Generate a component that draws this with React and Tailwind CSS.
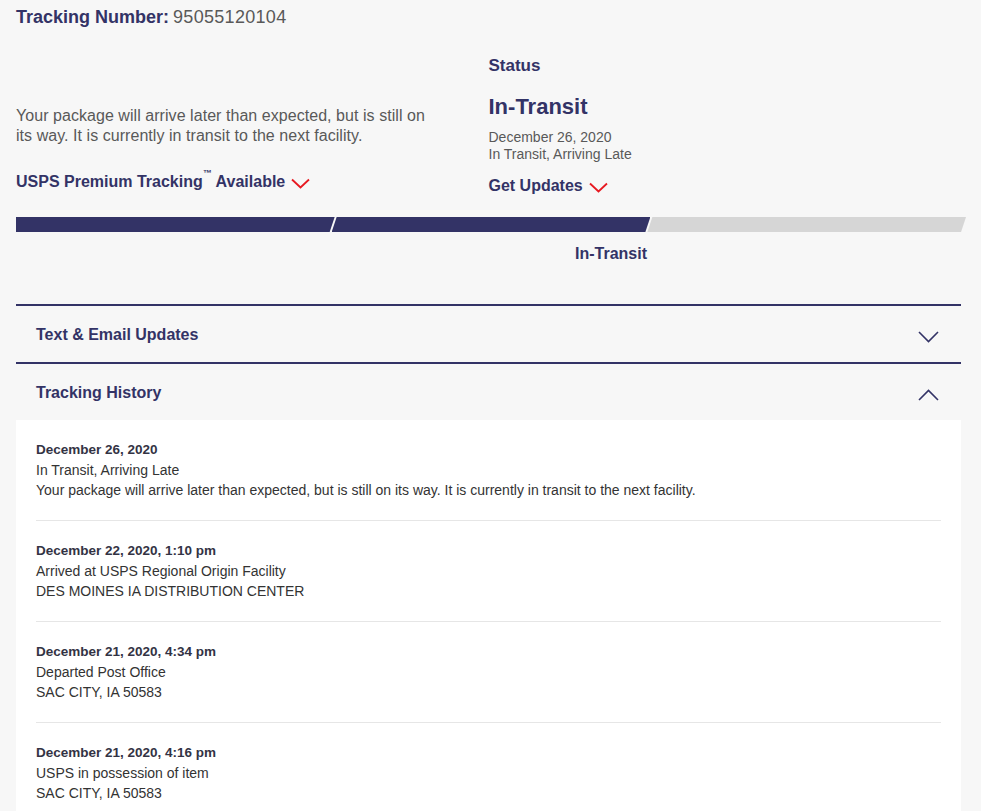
import React from "react";

const Chev = ({ up = false, className = "" }) => (
  <svg width="21" height="12" viewBox="0 0 21 12" className={className} fill="none">
    <polyline
      points={up ? "1,11 10.5,1.5 20,11" : "1,1 10.5,10.5 20,1"}
      stroke="#333366"
      strokeWidth="1.6"
    />
  </svg>
);

const RedChev = () => (
  <svg width="19" height="11" viewBox="0 0 19 11" fill="none" className="ml-[6px] mt-[2px]">
    <polyline points="1,1.5 9.5,9.5 18,1.5" stroke="#e71921" strokeWidth="1.8" />
  </svg>
);

const history = [
  {
    date: "December 26, 2020",
    lines: [
      "In Transit, Arriving Late",
      "Your package will arrive later than expected, but is still on its way. It is currently in transit to the next facility.",
    ],
  },
  {
    date: "December 22, 2020, 1:10 pm",
    lines: ["Arrived at USPS Regional Origin Facility", "DES MOINES IA DISTRIBUTION CENTER"],
  },
  {
    date: "December 21, 2020, 4:34 pm",
    lines: ["Departed Post Office", "SAC CITY, IA 50583"],
  },
  {
    date: "December 21, 2020, 4:16 pm",
    lines: ["USPS in possession of item", "SAC CITY, IA 50583"],
  },
];

export default function App() {
  return (
    <div
      className="min-h-[811px] bg-[#f7f7f7] pl-4 pr-5 text-[#333366]"
      style={{ fontFamily: '"Liberation Sans", Arial, sans-serif' }}
    >
      {/* Header */}
      <div className="flex h-[34px] items-center whitespace-nowrap text-[18px] leading-[24px]">
        <span className="font-bold">Tracking Number:</span>
        <span className="ml-[4px] text-[#595959] tracking-[0.3px]">95055120104</span>
      </div>

      {/* Two columns */}
      <div className="grid grid-cols-2">
        <div className="pr-[44px]">
          <p className="mt-[72px] text-[16px] leading-[20px] tracking-[0.05px] text-[#595959]">
            Your package will arrive later than expected, but is still on its way. It is currently in transit to the next facility.
          </p>
          <div className="mt-[25px] flex items-center text-[16px] font-bold leading-[22px]">
            <span>
              USPS Premium Tracking<sup className="text-[9px] align-super">™</sup> Available
            </span>
            <RedChev />
          </div>
        </div>
        <div>
          <div className="mt-[20px] text-[17px] font-bold leading-[24px]">Status</div>
          <div className="mt-[14px] text-[22px] font-bold leading-[30px]">In-Transit</div>
          <div className="mt-[7px] text-[14px] leading-[17px] text-[#595959]">
            <div>December 26, 2020</div>
            <div>In Transit, Arriving Late</div>
          </div>
          <div className="mt-[12px] flex items-center text-[16px] font-bold leading-[22px]">
            <span>Get Updates</span>
            <RedChev />
          </div>
        </div>
      </div>

      {/* Progress bar */}
      <div className="mt-[20px] w-[calc(100%+5px)]">
        <div className="flex h-[15px]">
          <div className="flex-1 bg-[#333366] [clip-path:polygon(0_0,100%_0,calc(100%-5px)_100%,0_100%)]" />
          <div className="-ml-[3px] flex-1 bg-[#333366] [clip-path:polygon(5px_0,100%_0,calc(100%-5px)_100%,0_100%)]" />
          <div className="-ml-[3px] flex-1 bg-[#d6d6d6] [clip-path:polygon(5px_0,100%_0,calc(100%-5px)_100%,0_100%)]" />
        </div>
        <div className="mt-[11px] flex text-[16px] font-bold leading-[22px]">
          <div className="flex-1" />
          <div className="-ml-[3px] flex-1 pr-[5px] text-right">In-Transit</div>
          <div className="-ml-[3px] flex-1" />
        </div>
      </div>

      {/* Accordions */}
      <div className="mt-[39px] border-t-2 border-[#333366]">
        <div className="flex h-[56px] items-center justify-between pl-5 pr-[22px] pt-[2px]">
          <span className="text-[16px] font-bold">Text &amp; Email Updates</span>
          <Chev className="mt-[3px]" />
        </div>
      </div>
      <div className="border-t-2 border-[#333366]">
        <div className="flex h-[56px] items-center justify-between pl-5 pr-[22px] pt-[2px]">
          <span className="text-[16px] font-bold">Tracking History</span>
          <Chev up className="mt-[3px]" />
        </div>
      </div>

      {/* History */}
      <div className="bg-white px-5 pt-5">
        {history.map((h, i) => (
          <div key={i} className={i < history.length - 1 ? "border-b border-[#e6e6e6] pb-5 mb-5" : "pb-5"}>
            <div className="text-[13.5px] font-bold leading-[20px] text-[#333344]">{h.date}</div>
            {h.lines.map((l, j) => (
              <div key={j} className="text-[14px] leading-[20px] text-[#333333]">
                {l}
              </div>
            ))}
          </div>
        ))}
      </div>
    </div>
  );
}
